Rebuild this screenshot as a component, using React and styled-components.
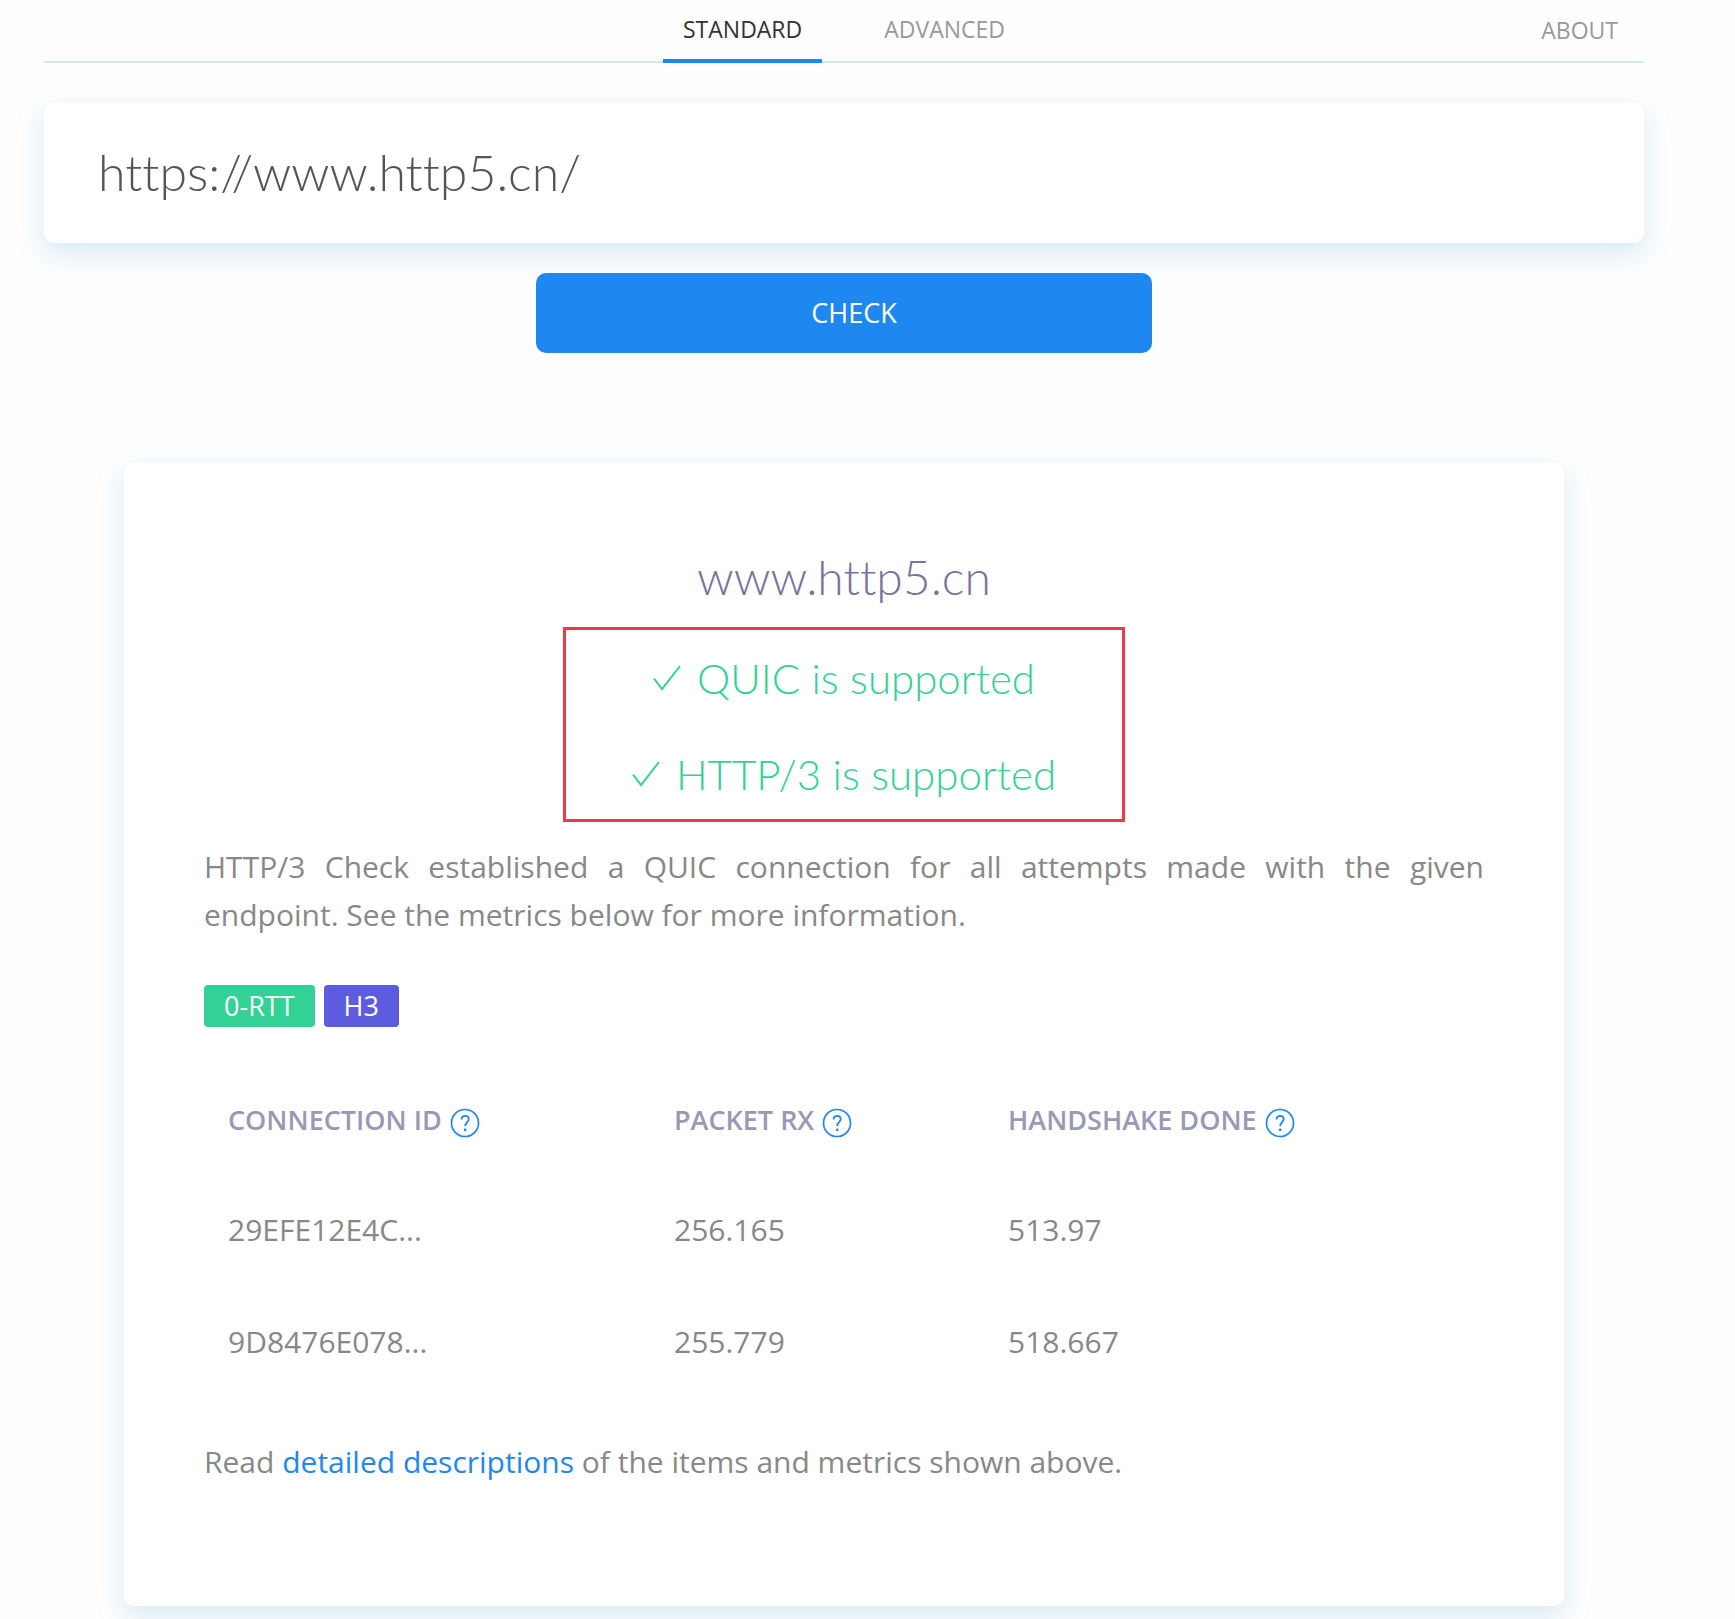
import React, { useState } from 'react'
import styled, { createGlobalStyle } from 'styled-components'

const metrics = [
  { id: '29EFE12E4C...', packetRx: '256.165', handshake: '513.97' },
  { id: '9D8476E078...', packetRx: '255.779', handshake: '518.667' },
]

const columns = ['Connection ID', 'Packet RX', 'Handshake Done']

const supported = ['QUIC is supported', 'HTTP/3 is supported']

const CheckIcon = () => (
  <Tick viewBox="0 0 28 28" aria-hidden="true">
    <path d="M1 14.5 L9 25 L27 2" />
  </Tick>
)

const HelpIcon = () => (
  <svg width="30" height="30" viewBox="0 0 30 30" fill="none" stroke="currentColor" aria-hidden="true">
    <circle cx="15" cy="15" r="13.5" strokeWidth="1.7" />
    <path d="M11.6 11.4 C11.6 9 13 7.8 15.1 7.8 C17.2 7.8 18.7 9 18.7 11.1 C18.7 14 15.2 14.2 15.2 18" strokeWidth="1.8" />
    <circle cx="15.2" cy="21.8" r="1.4" fill="currentColor" stroke="none" />
  </svg>
)

const App = () => {
  const [url, setUrl] = useState('https://www.http5.cn/')
  const [tab, setTab] = useState('Standard')

  return (
    <Container>
      <GlobalStyle />
      <Nav>
        <Tabs>
          {['Standard', 'Advanced'].map((name) => (
            <Tab key={name} type="button" $active={tab === name} onClick={() => setTab(name)}>
              {name}
            </Tab>
          ))}
        </Tabs>
        <AboutLink href="#about">About</AboutLink>
      </Nav>

      <Form onSubmit={(e) => e.preventDefault()}>
        <UrlInput
          type="text"
          aria-label="URL"
          spellCheck={false}
          value={url}
          onChange={(e) => setUrl(e.target.value)}
        />
        <CheckButton type="submit">Check</CheckButton>
      </Form>

      <Card>
        <Title>www.http5.cn</Title>
        <Highlight>
          {supported.map((text) => (
            <Support key={text}>
              <CheckIcon />
              {text}
            </Support>
          ))}
        </Highlight>
        <Text>
          HTTP/3 Check established a QUIC connection for all attempts made with the given
          endpoint. See the metrics below for more information.
        </Text>
        <Badges>
          <Badge $color="#32d296">0-RTT</Badge>
          <Badge $color="#5e5cde">H3</Badge>
        </Badges>
        <Table>
          <thead>
            <tr>
              {columns.map((name) => (
                <Th key={name} scope="col">
                  <Heading>
                    {name}
                    <HelpButton type="button" aria-label={`About ${name}`}>
                      <HelpIcon />
                    </HelpButton>
                  </Heading>
                </Th>
              ))}
            </tr>
          </thead>
          <tbody>
            {metrics.map((row) => (
              <tr key={row.id}>
                <Td>{row.id}</Td>
                <Td>{row.packetRx}</Td>
                <Td>{row.handshake}</Td>
              </tr>
            ))}
          </tbody>
        </Table>
        <Text>
          Read <Link href="#descriptions">detailed descriptions</Link> of the items and metrics shown above.
        </Text>
      </Card>
    </Container>
  )
}

const GlobalStyle = createGlobalStyle`
  * {
    box-sizing: border-box;
  }
  body {
    margin: 0;
    background: #fefefe;
    color: #888;
    font-family: "Open Sans", "Noto Sans", sans-serif;
    font-size: 30px;
    line-height: 48px;
  }
  button, input {
    font-family: inherit;
  }
`
const Container = styled.div`
  padding: 0 91px 14px 44px;
`
const Nav = styled.nav`
  display: grid;
  grid-template-columns: 1fr auto 1fr;
  height: 63px;
  border-bottom: 2px solid #d3e8f5;
`
const Tabs = styled.div`
  grid-column: 2;
  display: flex;
  gap: 42px;
  height: 63px;
`
const Tab = styled.button`
  padding: 0 20px 2px;
  border: 0;
  border-bottom: 4px solid ${({ $active }) => ($active ? '#1e87f0' : 'transparent')};
  background: none;
  color: ${({ $active }) => ($active ? '#333' : '#999')};
  font-size: 23px;
  line-height: 32px;
  text-transform: uppercase;
  cursor: pointer;
`
const AboutLink = styled.a`
  justify-self: end;
  align-self: center;
  padding: 0 26px 4px 0;
  color: #999;
  font-size: 23px;
  line-height: 32px;
  text-decoration: none;
  text-transform: uppercase;
`
const Form = styled.form`
  display: flex;
  flex-direction: column;
  align-items: center;
  gap: 30px;
  padding: 40px 0 110px;
`
const UrlInput = styled.input`
  width: 100%;
  height: 140px;
  padding: 0 54px 2px;
  border: 0;
  border-radius: 10px;
  background: #fff;
  box-shadow: 0 10px 30px rgba(30, 135, 190, 0.18);
  color: #555;
  font-family: Lato, sans-serif;
  font-size: 50px;
  font-variant-ligatures: none;
  font-weight: 300;
  outline: none;
`
const CheckButton = styled.button`
  width: 616px;
  max-width: 100%;
  height: 80px;
  padding: 0 0 2px 20px;
  border: 0;
  border-radius: 10px;
  background: #1e87f0;
  color: #fff;
  font-size: 27px;
  text-transform: uppercase;
  cursor: pointer;
`
const Card = styled.main`
  width: 90%;
  margin: 0 auto;
  padding: 80px 80px 120px;
  border-radius: 10px;
  background: #fff;
  box-shadow: 0 10px 30px rgba(30, 135, 190, 0.18);
`
const Title = styled.h1`
  margin: 0 0 16px;
  color: #74749c;
  font-family: Lato, sans-serif;
  font-size: 48px;
  font-variant-ligatures: none;
  font-weight: 300;
  line-height: 68px;
  text-align: center;
`
const Highlight = styled.section`
  display: flex;
  flex-direction: column;
  gap: 40px;
  width: 562px;
  max-width: 100%;
  margin: 0 auto 21px;
  padding: 20px 0 17px;
  border: 3px solid #f5364a;
`
const Support = styled.h2`
  display: flex;
  align-items: center;
  justify-content: center;
  gap: 16px;
  margin: 0;
  color: #32d296;
  font-family: Lato, sans-serif;
  font-size: 42px;
  font-weight: 300;
  line-height: 56px;
`
const Tick = styled.svg`
  width: 28px;
  height: 28px;
  fill: none;
  stroke: currentColor;
  stroke-width: 2;
`
const Text = styled.p`
  margin: 0;
  text-align: justify;
`
const Badges = styled.div`
  display: flex;
  gap: 9px;
  margin: 46px 0 40px;
`
const Badge = styled.span`
  padding: 0 20px;
  border-radius: 4px;
  background: ${({ $color }) => $color};
  color: #fff;
  font-size: 27px;
  line-height: 42px;
`
const Table = styled.table`
  width: 100%;
  margin-bottom: 41px;
  border-collapse: collapse;
  table-layout: fixed;
`
const Th = styled.th`
  height: 106px;
  padding: 0 24px;
  color: #9999b6;
  font-size: 27px;
  font-weight: 600;
  text-align: left;
  text-transform: uppercase;

  &:nth-child(1) {
    width: 446px;
  }
  &:nth-child(2) {
    width: 334px;
  }
`
const Heading = styled.div`
  display: flex;
  align-items: center;
  gap: 8px;
  white-space: nowrap;
`
const HelpButton = styled.button`
  display: flex;
  padding: 6px 0 0;
  border: 0;
  background: none;
  color: #1e87f0;
  cursor: pointer;
`
const Td = styled.td`
  height: 112px;
  padding: 2px 24px 0;
`
const Link = styled.a`
  color: #1e87f0;
  text-decoration: none;
`

export default App
